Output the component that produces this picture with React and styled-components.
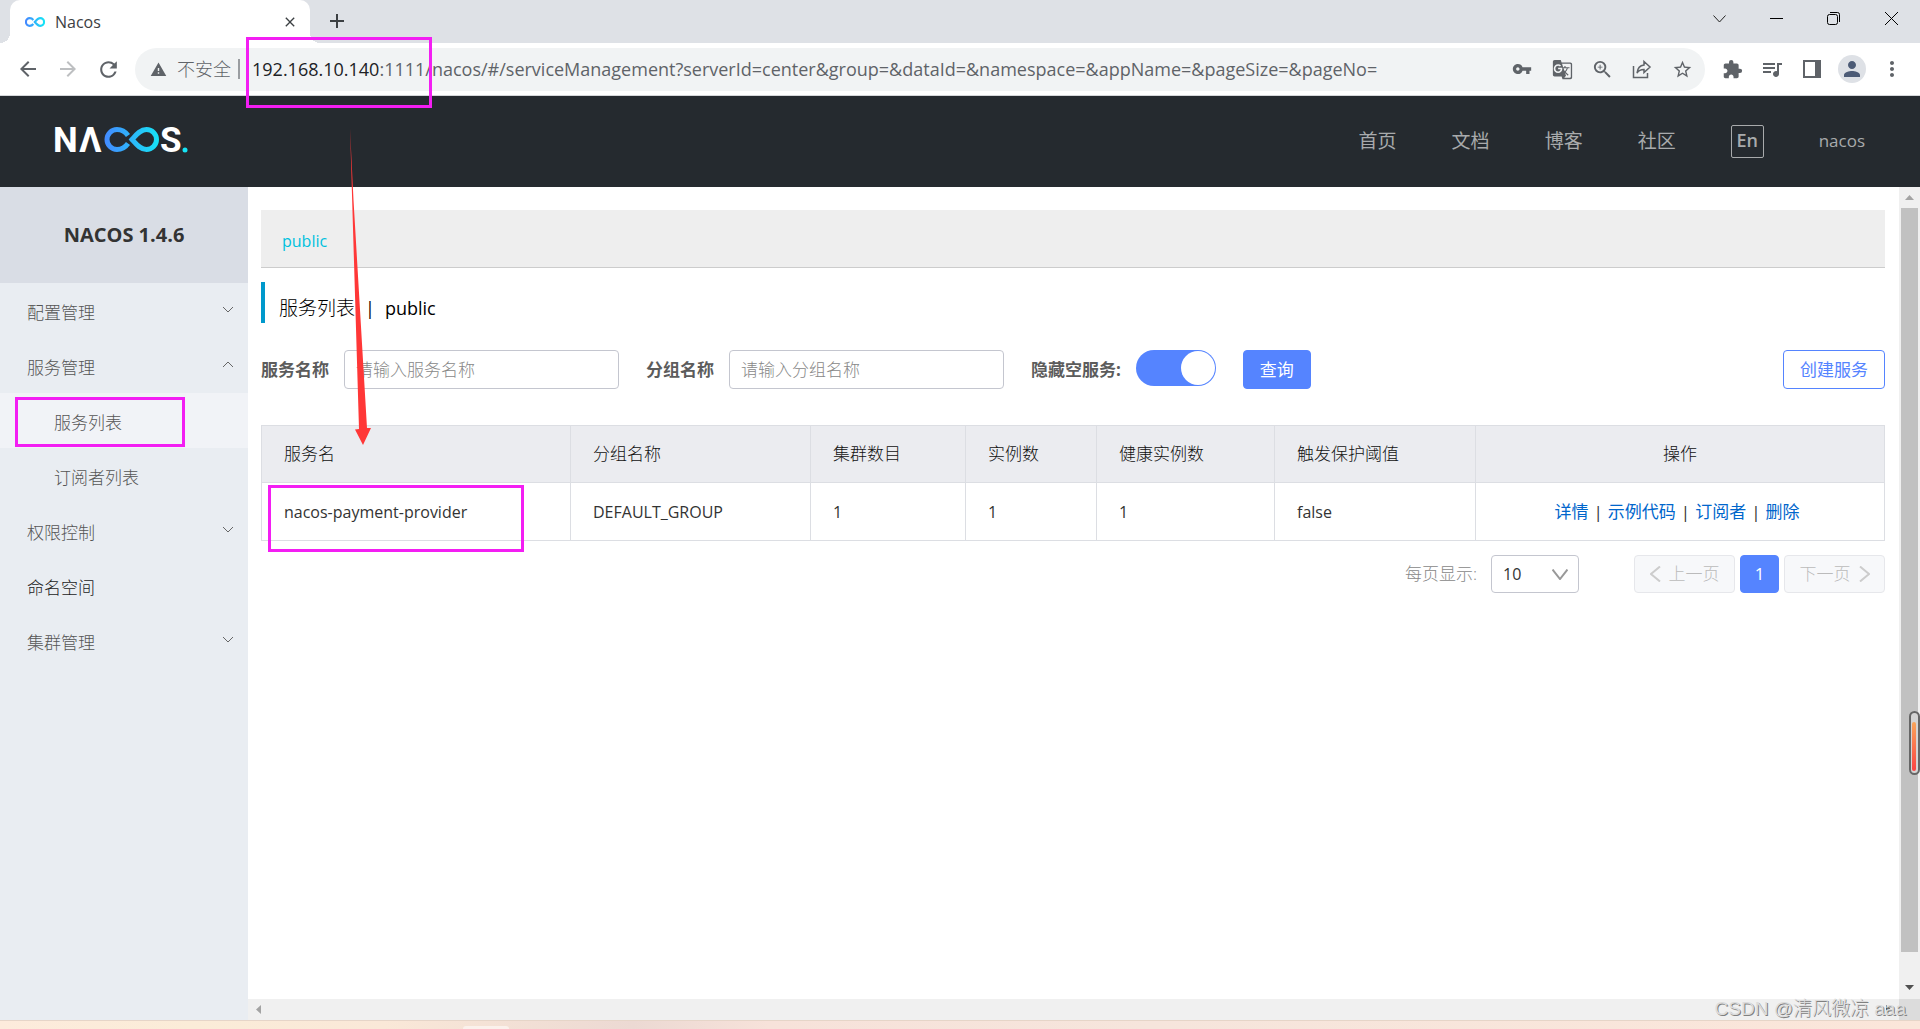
import React, { useState } from "react";
import styled, { createGlobalStyle } from "styled-components";
import {
	MdArrowBack,
	MdArrowForward,
	MdClose,
	MdExtension,
	MdGTranslate,
	MdMoreVert,
	MdPerson,
	MdQueueMusic,
	MdRefresh,
	MdStarBorder,
	MdVpnKey,
	MdWarning,
	MdZoomIn,
} from "react-icons/md";

const GlobalStyle = createGlobalStyle`
	* {
		box-sizing: border-box;
	}

	body {
		margin: 0;
		background: #fff;
		color: #333;
		font-family: "Open Sans", "Noto Sans CJK SC", sans-serif;
		font-size: 17px;
		font-weight: 300;
		line-height: 24px;
	}

	button, input, select {
		margin: 0;
		font: inherit;
	}

	a {
		text-decoration: none;
	}
`;

const WindowStyled = styled.div`
	position: relative;
	min-height: 100vh;
	display: flex;
	flex-direction: column;
	overflow: hidden;
`;

/* ---------- browser ---------- */

const TabStrip = styled.div`
	display: flex;
	align-items: flex-start;
	height: 43px;
	padding-left: 10px;
	background: #dee1e6;
`;

const Tab = styled.div`
	position: relative;
	display: flex;
	align-items: center;
	gap: 10px;
	width: 300px;
	height: 43px;
	padding: 0 12px 0 15px;
	background: #fff;
	border-radius: 10px 10px 0 0;
	font-size: 16px;
	font-weight: 400;
	color: #3c4043;

	&::before,
	&::after {
		content: "";
		position: absolute;
		bottom: 0;
		width: 10px;
		height: 10px;
	}

	&::before {
		right: 100%;
		background: radial-gradient(circle at 0 0, #dee1e6 10px, #fff 10px);
	}

	&::after {
		left: 100%;
		background: radial-gradient(circle at 100% 0, #dee1e6 10px, #fff 10px);
	}
`;

const TabTitle = styled.span`
	flex: 1;
`;

const IconButton = styled.button`
	display: flex;
	align-items: center;
	justify-content: center;
	width: ${(props) => props.$width || 40}px;
	height: ${(props) => props.$height || 40}px;
	padding: 0;
	border: 0;
	background: none;
	color: ${(props) => props.$color || "#5f6368"};
`;

const WindowControls = styled.div`
	display: flex;
	margin-left: auto;
`;

const Toolbar = styled.div`
	display: flex;
	align-items: center;
	height: 53px;
	padding: 0 8px;
	border-bottom: 1px solid #d5d7da;
	background: #fff;
`;

const AddressBar = styled.div`
	flex: 1;
	display: flex;
	align-items: center;
	height: 43px;
	margin: 0 7px;
	padding: 0 3px 0 15px;
	border-radius: 22px;
	background: #f1f3f4;
	color: #5f6368;
	font-size: 18px;
`;

const Insecure = styled.span`
	margin-left: 10px;
	padding-right: 7px;
	border-right: 2px solid #9a9da1;
	line-height: 20px;
`;

const Url = styled.span`
	flex: 1;
	margin-left: 12px;
	font-weight: 400;
	white-space: nowrap;

	b {
		font-weight: 400;
		color: #202124;
	}
`;

const Avatar = styled.span`
	display: flex;
	align-items: center;
	justify-content: center;
	width: 28px;
	height: 28px;
	border-radius: 50%;
	background: #dee1e6;
	color: #4c5b76;
`;

/* ---------- nacos header ---------- */

const HeaderStyled = styled.header`
	display: flex;
	align-items: center;
	justify-content: space-between;
	height: 91px;
	padding: 0 55px 0 52px;
	background: #252a2f;
`;

const NavStyled = styled.nav`
	display: flex;
	align-items: center;
	gap: 55px;
	font-size: 19px;
	font-weight: 400;
	color: #a8aaac;

	a {
		padding-bottom: 2px;
		color: inherit;
	}
`;

const LangButton = styled.button`
	width: 33px;
	height: 33px;
	padding: 0;
	border: 1px solid #a8aaac;
	border-radius: 2px;
	background: none;
	color: #a8aaac;
	font-size: 18px;
	font-weight: 600;
	line-height: 24px;
	padding-bottom: 4px;
`;

const UserLink = styled.a`
	font-size: 17px;
`;

/* ---------- body ---------- */

const BodyStyled = styled.div`
	flex: 1;
	display: flex;
`;

const SideStyled = styled.aside`
	width: 248px;
	background: #e9edf2;
`;

const SideTitle = styled.h1`
	margin: 0;
	height: 96px;
	background: #d9dde5;
	color: #333;
	font-size: 20px;
	line-height: 96px;
	text-align: center;
`;

const MenuItem = styled.button`
	display: flex;
	align-items: center;
	justify-content: space-between;
	width: 100%;
	height: 55px;
	padding: 4px 15px 0 ${(props) => (props.$child ? 54 : 27)}px;
	border: 0;
	background: ${(props) => (props.$active ? "#f1f3f7" : "none")};
	color: ${(props) => (props.$dark ? "#222" : "#555")};
	text-align: left;

	svg {
		margin-bottom: 6px;
	}
`;

const MainStyled = styled.div`
	flex: 1;
	display: grid;
	grid-template-columns: 1fr 21px;
	grid-template-rows: 1fr 21px;
`;

const ContentStyled = styled.main`
	padding: 23px 14px 20px 13px;
`;

const NamespaceBar = styled.div`
	height: 58px;
	padding: 4px 21px 0;
	border-bottom: 1px solid #ccc;
	background: #eee;
	font-size: 16px;
	font-weight: 400;
	line-height: 54px;

	a {
		color: #00c1de;
	}
`;

const PageTitle = styled.h2`
	display: flex;
	gap: 10px;
	margin: 14px 0 27px;
	padding: 12px 0 1px 14px;
	border-left: 4px solid #09c;
	color: #000;
	font-size: 19px;
	font-weight: 300;
	line-height: 28px;
`;

const TitleLatin = styled.span`
	font-size: 18px;
	font-weight: 400;
`;

const FormStyled = styled.form`
	display: flex;
	align-items: flex-start;
	gap: 27px;
	margin-bottom: 36px;
`;

const Field = styled.div`
	display: flex;
	gap: 15px;

	label {
		color: #5c5c5c;
		font-weight: bold;
		line-height: 39px;
	}
`;

const TextInput = styled.input`
	width: 275px;
	height: 39px;
	padding: 0 11px;
	border: 1px solid #c4c6cf;
	border-radius: 4px;
	color: #333;

	&::placeholder {
		color: #888;
	}
`;

const Switch = styled.input`
	appearance: none;
	display: flex;
	justify-content: ${(props) => (props.checked ? "flex-end" : "flex-start")};
	width: 80px;
	height: 36px;
	padding: 1px;
	border-radius: 18px;
	background: ${(props) => (props.checked ? "#5584ff" : "#c4c6cf")};

	&::before {
		content: "";
		width: 34px;
		height: 34px;
		border-radius: 50%;
		background: #fff;
	}
`;

const ButtonStyled = styled.button`
	height: 39px;
	padding: 0 16px;
	border: 1px solid #5584ff;
	border-radius: 4px;
	background: ${(props) => (props.$primary ? "#5584ff" : "#fff")};
	color: ${(props) => (props.$primary ? "#fff" : "#5584ff")};
	font-weight: 400;
`;

const Spacer = styled.span`
	flex: 1;
`;

const TableStyled = styled.table`
	width: 100%;
	border-collapse: collapse;
	table-layout: fixed;

	th,
	td {
		height: 58px;
		padding: 0 22px;
		border: 1px solid #dcdee3;
		font-weight: 300;
		text-align: left;
	}

	th {
		height: 57px;
		background: #ebecf0;
		color: #111;
	}

	td {
		font-size: 16px;
		font-weight: 400;
	}

	th:last-child,
	td:last-child {
		text-align: center;
	}

	td:last-child {
		padding-right: 28px;
		font-size: 17px;
	}

	td a {
		color: #06c;
	}
`;

const Column = styled.col`
	width: ${(props) => props.$width}px;
`;

const Divider = styled.span`
	margin: 0 5px;
`;

const PagerStyled = styled.div`
	display: flex;
	align-items: center;
	justify-content: flex-end;
	gap: 5px;
	margin-top: 14px;

	label {
		margin-right: 9px;
		color: #888;
	}
`;

const SelectWrap = styled.div`
	display: grid;
	align-items: center;
	margin-right: 50px;

	> * {
		grid-area: 1 / 1;
	}

	svg {
		justify-self: end;
		margin-right: 11px;
		pointer-events: none;
	}
`;

const SelectStyled = styled.select`
	appearance: none;
	width: 88px;
	height: 38px;
	padding: 0 11px;
	border: 1px solid #c4c6cf;
	border-radius: 4px;
	background: #fff;
	color: #333;
	font-size: 16px;
	font-weight: 400;
`;

const PageButton = styled.button`
	display: flex;
	align-items: center;
	justify-content: center;
	gap: 8px;
	width: ${(props) => (props.$current ? 39 : 101)}px;
	height: 38px;
	padding: 0;
	border: 1px solid ${(props) => (props.$current ? "#5584ff" : "#e6e7eb")};
	border-radius: 4px;
	background: ${(props) => (props.$current ? "#5584ff" : "#f7f8fa")};
	color: ${(props) => (props.$current ? "#fff" : "#bbb")};
	font-weight: ${(props) => (props.$current ? 400 : 300)};
`;

const ScrollY = styled.div`
	display: flex;
	flex-direction: column;
	align-items: center;
	gap: 8px;
	padding: 8px 0 9px;
	background: #f0f0f0;
`;

const ScrollThumb = styled.div`
	flex: 1;
	width: 17px;
	margin-bottom: 25px;
	background: #c1c1c1;
`;

const ScrollX = styled.div`
	display: flex;
	align-items: center;
	justify-content: space-between;
	padding: 0 8px;
	background: #f0f0f0;
`;

const ScrollCorner = styled.div`
	background: #dcdcdc;
`;

const Taskbar = styled.footer`
	height: 9px;
	padding-left: 463px;
	border-top: 1px solid #e6d5c8;
	background: linear-gradient(
		90deg,
		#fdebdc,
		#fbecd8 10%,
		#fae8d8 20%,
		#ecd9d3 33%,
		#f7e2da 40%,
		#f6e5dc 60%,
		#fbe6da
	);
`;

const TaskTab = styled.div`
	width: 46px;
	height: 3px;
	margin-top: 5px;
	border-radius: 4px 4px 0 0;
	background: #fbf1ec;
`;

/* ---------- things lying over the page ---------- */

const Annotations = styled.svg`
	position: absolute;
	top: 0;
	left: 0;
	pointer-events: none;
`;

const Gauge = styled.div`
	position: absolute;
	top: 711px;
	right: 0;
	width: 11px;
	height: 64px;
	padding: 9px 1px 2px;
	border: 2px solid #666;
	border-radius: 6px;
	background: #d4d4d4;

	&::before {
		content: "";
		display: block;
		height: 49px;
		width: 4px;
		border-radius: 2px;
		background: linear-gradient(#f9a55a, #fb4343);
	}
`;

const Watermark = styled.div`
	position: absolute;
	right: 14px;
	bottom: 8px;
	color: #dcdcdc;
	font-family: "Liberation Sans", "Noto Sans CJK SC", sans-serif;
	font-size: 19px;
	text-shadow: 1px 1px 0 #808080;
`;

/* ---------- icons ---------- */

const Chevron = ({ points, width, height, color = "#666", stroke = 1 }) => (
	<svg
		width={width}
		height={height}
		viewBox={`0 0 ${width} ${height}`}
		fill="none"
		stroke={color}
		strokeWidth={stroke}>
		<polyline points={points} />
	</svg>
);

const Infinity = ({ id, width, height }) => (
	<svg width={width} height={height} viewBox="0 0 55 26">
		<defs>
			<linearGradient id={id} x1="0" x2="1" y1="0" y2="0">
				<stop offset="0" stopColor="#4489ff" />
				<stop offset="1" stopColor="#16e4f5" />
			</linearGradient>
		</defs>
		<path
			d="M23 7.5C20.500 4.500 17 2.500 13 2.500a10.500 10.500 0 0 0 0 21C17 23.500 20.500 21.500 23 18.500M27 13C31 8 35.500 2.500 42 2.500a10.500 10.500 0 0 1 0 21C35.500 23.500 31 18 27 13Z"
			fill="none"
			stroke={`url(#${id})`}
			strokeWidth="6"
		/>
	</svg>
);

const Logo = () => (
	<svg
		width="140"
		height="48"
		viewBox="-3 -8 140 48"
		role="img"
		aria-label="NACOS"
		fontFamily="Roboto, sans-serif"
		fontWeight="700"
		fontSize="35"
		fill="#fff">
		<defs>
			<linearGradient
				id="logo-loop"
				gradientUnits="userSpaceOnUse"
				x1="49"
				x2="104"
				y1="0"
				y2="0">
				<stop offset="0" stopColor="#4489ff" />
				<stop offset="1" stopColor="#16e4f5" />
			</linearGradient>
		</defs>
		<text x="-2" y="26">
			N
		</text>
		<text x="24" y="26">
			Λ
		</text>
		<path
			d="M73 9.500C70.500 6 67 3.500 62 3.500a10 10 0 0 0 0 20C67 23.500 70.500 21 73 17.500M77 13.500C81 9 85 3.500 91.500 3.500a10 10 0 0 1 0 20C85 23.500 81 18 77 13.500Z"
			fill="none"
			stroke="url(#logo-loop)"
			strokeWidth="5"
		/>
		<text x="105" y="26">
			S
		</text>
		<circle cx="130" cy="24" r="2.500" fill="#16e4f5" />
	</svg>
);

const ShareIcon = () => (
	<svg
		width="20"
		height="20"
		viewBox="0 0 20 20"
		fill="none"
		stroke="#5f6368"
		strokeWidth="1.500">
		<path d="M1.500 7v11.500h14V14" />
		<path d="M12 2.500 18 8l-6 5.500V10.500C8.500 10.500 6.500 11.500 5 14 5.500 9.500 8 6.500 12 6Z" />
	</svg>
);

const SidePanelIcon = () => (
	<svg width="18" height="18" viewBox="0 0 18 18">
		<path fill="#5f6368" fillRule="evenodd" d="M0 0h18v18H0ZM2 2v14h10V2Z" />
	</svg>
);

const Triangle = ({ points, color, width = 9, height = 5 }) => (
	<svg width={width} height={height} viewBox={`0 0 ${width} ${height}`}>
		<polygon points={points} fill={color} />
	</svg>
);

/* ---------- data ---------- */

const menus = [
	{ name: "配置管理", arrow: "down" },
	{ name: "服务管理", arrow: "up" },
	{ name: "服务列表", child: true, active: true },
	{ name: "订阅者列表", child: true },
	{ name: "权限控制", arrow: "down" },
	{ name: "命名空间", dark: true },
	{ name: "集群管理", arrow: "down" },
];

const navs = ["首页", "文档", "博客", "社区"];

const columns = [
	{ title: "服务名", width: 309 },
	{ title: "分组名称", width: 240 },
	{ title: "集群数目", width: 155 },
	{ title: "实例数", width: 131 },
	{ title: "健康实例数", width: 178 },
	{ title: "触发保护阈值", width: 201 },
	{ title: "操作" },
];

const services = [
	{
		name: "nacos-payment-provider",
		groupName: "DEFAULT_GROUP",
		clusterCount: 1,
		ipCount: 1,
		healthyInstanceCount: 1,
		triggerFlag: "false",
	},
];

const actions = ["详情", "示例代码", "订阅者", "删除"];

const Browser = () => (
	<>
		<TabStrip>
			<Tab>
				<Infinity id="favicon" width={20} height={12} />
				<TabTitle>Nacos</TabTitle>
				<IconButton $width={16} $height={16} aria-label="关闭标签页">
					<MdClose size={18} color="#3c4043" />
				</IconButton>
			</Tab>
			<IconButton $width={54} $height={42} aria-label="新标签页">
				<svg width="16" height="16" viewBox="0 0 16 16">
					<path d="M8 1v14M1 8h14" stroke="#3c4043" strokeWidth="2" />
				</svg>
			</IconButton>
			<WindowControls>
				<IconButton $width={58} $height={37} aria-label="搜索标签页">
					<Chevron
						points="0.500,0.500 6.500,7 12.500,0.500"
						width={13}
						height={8}
						color="#222"
					/>
				</IconButton>
				<IconButton $width={57} $height={37} aria-label="最小化">
					<svg width="13" height="1">
						<rect width="13" height="1" fill="#000" />
					</svg>
				</IconButton>
				<IconButton $width={57} $height={37} aria-label="还原">
					<svg
						width="13"
						height="13"
						viewBox="0 0 13 13"
						fill="none"
						stroke="#000">
						<rect x="0.500" y="2.500" width="10" height="10" rx="2" />
						<path d="M3 .5h7.500a2 2 0 0 1 2 2V10" />
					</svg>
				</IconButton>
				<IconButton $width={58} $height={37} aria-label="关闭">
					<svg width="13" height="13" viewBox="0 0 13 13">
						<path d="M0 0 13 13M13 0 0 13" stroke="#000" />
					</svg>
				</IconButton>
			</WindowControls>
		</TabStrip>
		<Toolbar>
			<IconButton aria-label="后退">
				<MdArrowBack size={24} />
			</IconButton>
			<IconButton aria-label="前进" $color="#bdbfc1">
				<MdArrowForward size={24} />
			</IconButton>
			<IconButton aria-label="刷新">
				<MdRefresh size={25} />
			</IconButton>
			<AddressBar>
				<MdWarning size={17} />
				<Insecure>不安全</Insecure>
				<Url>
					<b>192.168.10.140</b>
					:1111/nacos/#/serviceManagement?serverId=center&group=&dataId=&namespace=&appName=&pageSize=&pageNo=
				</Url>
				<IconButton aria-label="密码">
					<MdVpnKey size={20} />
				</IconButton>
				<IconButton aria-label="翻译">
					<MdGTranslate size={21} />
				</IconButton>
				<IconButton aria-label="缩放">
					<MdZoomIn size={23} />
				</IconButton>
				<IconButton aria-label="分享">
					<ShareIcon />
				</IconButton>
				<IconButton aria-label="收藏">
					<MdStarBorder size={21} />
				</IconButton>
			</AddressBar>
			<IconButton aria-label="扩展程序">
				<MdExtension size={21} />
			</IconButton>
			<IconButton aria-label="媒体">
				<MdQueueMusic size={24} />
			</IconButton>
			<IconButton aria-label="侧边栏">
				<SidePanelIcon />
			</IconButton>
			<IconButton aria-label="用户">
				<Avatar>
					<MdPerson size={24} />
				</Avatar>
			</IconButton>
			<IconButton aria-label="菜单">
				<MdMoreVert size={24} />
			</IconButton>
		</Toolbar>
	</>
);

const Header = () => (
	<HeaderStyled>
		<Logo />
		<NavStyled>
			{navs.map((nav) => (
				<a key={nav} href="#nav">
					{nav}
				</a>
			))}
			<LangButton>En</LangButton>
			<UserLink href="#user">nacos</UserLink>
		</NavStyled>
	</HeaderStyled>
);

const Sidebar = () => (
	<SideStyled>
		<SideTitle>NACOS 1.4.6</SideTitle>
		{menus.map((menu) => (
			<MenuItem
				key={menu.name}
				$child={menu.child}
				$active={menu.active}
				$dark={menu.dark}>
				{menu.name}
				{menu.arrow && (
					<Chevron
						points={menu.arrow === "up" ? "0,6 5,1 10,6" : "0,1 5,6 10,1"}
						width={10}
						height={7}
					/>
				)}
			</MenuItem>
		))}
	</SideStyled>
);

const SearchForm = () => {
	const [hideEmpty, setHideEmpty] = useState(true);

	return (
		<FormStyled onSubmit={(e) => e.preventDefault()}>
			<Field>
				<label htmlFor="serviceName">服务名称</label>
				<TextInput id="serviceName" placeholder="请输入服务名称" />
			</Field>
			<Field>
				<label htmlFor="groupName">分组名称</label>
				<TextInput id="groupName" placeholder="请输入分组名称" />
			</Field>
			<Field>
				<label htmlFor="hideEmpty">隐藏空服务:</label>
				<Switch
					id="hideEmpty"
					type="checkbox"
					checked={hideEmpty}
					onChange={(e) => setHideEmpty(e.target.checked)}
				/>
			</Field>
			<ButtonStyled $primary type="submit">
				查询
			</ButtonStyled>
			<Spacer />
			<ButtonStyled type="button">创建服务</ButtonStyled>
		</FormStyled>
	);
};

const ServiceTable = () => (
	<TableStyled>
		<colgroup>
			{columns.map((col) => (
				<Column key={col.title} $width={col.width} />
			))}
		</colgroup>
		<thead>
			<tr>
				{columns.map((col) => (
					<th key={col.title}>{col.title}</th>
				))}
			</tr>
		</thead>
		<tbody>
			{services.map((service) => (
				<tr key={service.name}>
					<td>{service.name}</td>
					<td>{service.groupName}</td>
					<td>{service.clusterCount}</td>
					<td>{service.ipCount}</td>
					<td>{service.healthyInstanceCount}</td>
					<td>{service.triggerFlag}</td>
					<td>
						{actions.map((action, index) => (
							<React.Fragment key={action}>
								{index > 0 && <Divider>|</Divider>}
								<a href="#action">{action}</a>
							</React.Fragment>
						))}
					</td>
				</tr>
			))}
		</tbody>
	</TableStyled>
);

const Pager = () => (
	<PagerStyled>
		<label htmlFor="pageSize">每页显示:</label>
		<SelectWrap>
			<SelectStyled id="pageSize" defaultValue="10">
				<option>10</option>
				<option>20</option>
				<option>50</option>
			</SelectStyled>
			<Chevron
				points="0.500,0.500 8,10 15.500,0.500"
				width={16}
				height={11}
				color="#999"
				stroke={2}
			/>
		</SelectWrap>
		<PageButton disabled>
			<Chevron
				points="10,0.500 1,8 10,15.500"
				width={11}
				height={16}
				color="#ccc"
				stroke={2}
			/>
			上一页
		</PageButton>
		<PageButton $current>1</PageButton>
		<PageButton disabled>
			下一页
			<Chevron
				points="1,0.500 10,8 1,15.500"
				width={11}
				height={16}
				color="#ccc"
				stroke={2}
			/>
		</PageButton>
	</PagerStyled>
);

const App = () => {
	return (
		<WindowStyled>
			<GlobalStyle />
			<Browser />
			<Header />
			<BodyStyled>
				<Sidebar />
				<MainStyled>
					<ContentStyled>
						<NamespaceBar>
							<a href="#public">public</a>
						</NamespaceBar>
						<PageTitle>
							<span>服务列表</span>
							<TitleLatin>|</TitleLatin>
							<TitleLatin>public</TitleLatin>
						</PageTitle>
						<SearchForm />
						<ServiceTable />
						<Pager />
					</ContentStyled>
					<ScrollY>
						<Triangle points="0,5 4.500,0 9,5" color="#a3a3a3" />
						<ScrollThumb />
						<Triangle points="0,0 9,0 4.500,5" color="#505050" />
					</ScrollY>
					<ScrollX>
						<Triangle
							points="5,0 5,9 0,4.500"
							color="#a3a3a3"
							width={5}
							height={9}
						/>
						<Triangle
							points="0,0 0,9 5,4.500"
							color="#505050"
							width={5}
							height={9}
						/>
					</ScrollX>
					<ScrollCorner />
				</MainStyled>
			</BodyStyled>
			<Taskbar>
				<TaskTab />
			</Taskbar>

			<Gauge />
			<Watermark>CSDN @清风微凉 aaa</Watermark>
			<Annotations width="540" height="560" viewBox="0 0 540 560">
				<g fill="none" stroke="#f31ef3" strokeWidth="3">
					<rect x="247.500" y="38.500" width="183" height="68" />
					<rect x="16.500" y="398.500" width="167" height="47" />
					<rect x="269.500" y="486.500" width="253" height="64" />
				</g>
				<path
					d="M350 128 359 429 355 429.500 363 445 371 428 367 428 353.500 200Z"
					fill="#ff3737"
				/>
			</Annotations>
		</WindowStyled>
	);
};

export default App;
